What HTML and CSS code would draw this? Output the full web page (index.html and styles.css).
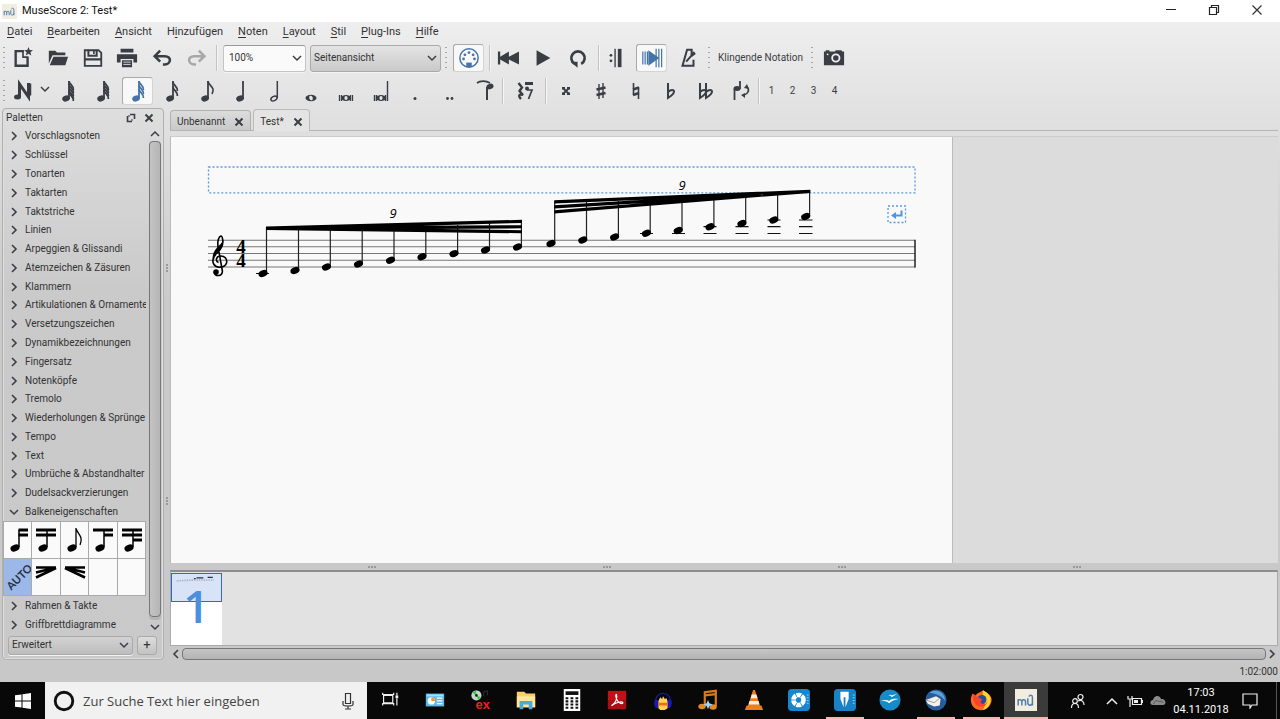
FILE: index.html
```html
<!DOCTYPE html>
<html lang="de">
<head>
<meta charset="utf-8">
<title>MuseScore 2: Test*</title>
<link rel="stylesheet" href="styles.css">
</head>
<body>
<svg class="defs" aria-hidden="true">
  <defs>
    <symbol id="chev-r" viewBox="0 0 10 10"><path d="M3 1l4 4-4 4" fill="none" stroke="#3b3f45" stroke-width="1.6"/></symbol>
    <symbol id="chev-d" viewBox="0 0 10 10"><path d="M1 3l4 4 4-4" fill="none" stroke="#3b3f45" stroke-width="1.5"/></symbol>
    <symbol id="cross" viewBox="0 0 10 10"><path d="M1.500 1.500l7 7m0-7l-7 7" stroke="#3b3f45" stroke-width="2"/></symbol>
    <symbol id="head" viewBox="-6 -5 12 10"><ellipse rx="4.700" ry="3.300" transform="rotate(-22)"/></symbol>
    <symbol id="note" viewBox="0 0 24 24"><ellipse cx="10" cy="19.500" rx="3.900" ry="2.900" transform="rotate(-20 10 19.500)" fill="currentColor"/><path d="M13 2v18" stroke="currentColor" stroke-width="1.800"/></symbol>
    <symbol id="flag" viewBox="0 0 24 24"><path d="M13 2c.4 3.500 5 4.500 4.400 9" stroke="currentColor" stroke-width="1.800" fill="none"/></symbol>
    <symbol id="flat" viewBox="0 0 24 24"><path d="M9 4v15c4-2.500 6-4.500 6-6.500s-3-2.500-6 .5" fill="none" stroke="currentColor" stroke-width="2"/></symbol>
    <symbol id="logo" viewBox="0 0 24 24"><rect width="24" height="24" fill="#f3ece0"/><path d="M3.500 18v-7m0 2c1-2 4-2 4 1v4m0-4c0-3 4-3 4 0v4M14 10v5c0 3.500 5 3.500 5 0m0 3V9c0-3-3.500-3-3.500-.5" fill="none" stroke="#4b7da8" stroke-width="1.600"/></symbol>
  </defs>
</svg>

<div class="window">
  <header class="titlebar">
    <svg class="app-icon"><use href="#logo"/></svg>
    <h1 class="app-title">MuseScore 2: Test*</h1>
    <div class="window-controls">
      <button class="win-btn" aria-label="Minimieren"><svg viewBox="0 0 12 12"><path d="M1 5.500h10" stroke="#222"/></svg></button>
      <button class="win-btn" aria-label="Wiederherstellen"><svg viewBox="0 0 12 12"><path d="M1.500 3.500h7v7h-7zM3.500 3.500v-2h7v7h-2" fill="none" stroke="#222" stroke-width="1.200"/></svg></button>
      <button class="win-btn" aria-label="Schließen"><svg viewBox="0 0 12 12"><path d="M1.500 1.500l9 9m0-9l-9 9" stroke="#333" stroke-width="1.200"/></svg></button>
    </div>
  </header>

  <nav class="menubar">
    <button><u>D</u>atei</button><button><u>B</u>earbeiten</button><button><u>A</u>nsicht</button><button>H<u>i</u>nzufügen</button><button><u>N</u>oten</button><button><u>L</u>ayout</button><button><u>S</u>til</button><button><u>P</u>lug-Ins</button><button><u>H</u>ilfe</button>
  </nav>

  <div class="toolbar">
    <span class="grip"></span>
    <div class="tools file-tools">
      <button class="tool" aria-label="Neu"><svg viewBox="0 0 24 24"><path d="M13 4.500H4v16h13v-9" fill="none" stroke="currentColor" stroke-width="2.600"/><path d="M12 4v7h6" fill="none" stroke="currentColor" stroke-width="1.800"/><path d="M18 0l1.300 3.300 3.600.2-2.800 2.300 1 3.600L18 7.400l-3 2 1-3.600-2.900-2.300 3.600-.2z" fill="currentColor"/></svg></button>
      <button class="tool" aria-label="Öffnen"><svg viewBox="0 0 24 24"><path d="M2 4h7l2 2h9v3H6L2 18zM7 10.500h16L20 20H3z" fill="currentColor"/></svg></button>
      <button class="tool" aria-label="Speichern"><svg viewBox="0 0 24 24"><path d="M3 3.500h15l3 3v14H3z" fill="none" stroke="currentColor" stroke-width="2"/><path d="M7 3v6.500h9V3M3 13.500h18" fill="none" stroke="currentColor" stroke-width="2.200"/><path d="M13 4v3.500" stroke="currentColor" stroke-width="1.800"/></svg></button>
      <button class="tool" aria-label="Drucken"><svg viewBox="0 0 24 24"><path d="M5 2h14v4H5zM1 8h22v9h-4v-4H5v4H1zM6.500 14.500h11V22h-11z" fill="currentColor"/><path d="M8 16.500h8M8 19h8" stroke="#ddd"/></svg></button>
      <button class="tool" aria-label="Rückgängig"><svg viewBox="0 0 24 24"><path d="M4 10h11c8 0 7 9 0 9h-2M10 4l-6 6 6 6" fill="none" stroke="currentColor" stroke-width="2.800"/></svg></button>
      <button class="tool disabled" aria-label="Wiederholen" disabled><svg viewBox="0 0 24 24"><path d="M20 10H9c-8 0-7 9 0 9h2M14 4l6 6-6 6" fill="none" stroke="currentColor" stroke-width="2.800"/></svg></button>
    </div>
    <span class="sep"></span>
    <div class="combo zoom-combo"><select aria-label="Zoom"><option>100%</option></select><svg><use href="#chev-d"/></svg></div>
    <div class="combo view-combo"><select aria-label="Ansicht"><option>Seitenansicht</option></select><svg><use href="#chev-d"/></svg></div>
    <span class="grip"></span>
    <button class="tool pressed" aria-label="MIDI-Eingabe"><svg viewBox="0 0 24 24"><circle cx="12" cy="12" r="10" fill="none" stroke="currentColor" stroke-width="1.600"/><g fill="currentColor"><circle cx="6" cy="13" r="1.500"/><circle cx="7.500" cy="8.500" r="1.500"/><circle cx="12" cy="6" r="1.500"/><circle cx="16.500" cy="8.500" r="1.500"/><circle cx="18" cy="13" r="1.500"/><path d="M9 17h6v5H9z"/></g></svg></button>
    <span class="sep"></span>
    <div class="tools play-tools">
      <button class="tool" aria-label="Zum Anfang"><svg viewBox="0 0 24 24"><path d="M1 5h2.500v5.500L13 5v5.500L24 5v14l-11-5.500V19l-9.500-5.500V19H1z" fill="currentColor"/></svg></button>
      <button class="tool" aria-label="Wiedergabe"><svg viewBox="0 0 24 24"><path d="M5 3.500L20 12 5 20.500z" fill="currentColor"/></svg></button>
      <button class="tool" aria-label="Schleife"><svg viewBox="0 0 24 24"><path d="M8.500 18.500a7.300 7.300 0 1 1 7 0" fill="none" stroke="currentColor" stroke-width="2.900"/><path d="M4 16h7.500v6.500z" fill="currentColor"/></svg></button>
    </div>
    <span class="sep"></span>
    <button class="tool" aria-label="Wiederholungen abspielen"><svg viewBox="0 0 24 24"><circle cx="6.500" cy="9" r="1.500" fill="currentColor"/><circle cx="6.500" cy="15" r="1.500" fill="currentColor"/><path d="M11 2v20" stroke="currentColor" stroke-width="1.500"/><path d="M16 2v20" stroke="currentColor" stroke-width="4"/></svg></button>
    <button class="tool pressed" aria-label="Partitur schwenken"><svg viewBox="0 0 24 24"><path d="M2 5v14M4.500 5v14M7 5v14M16.500 2v20M19.500 2v20M22.500 2v20" stroke="currentColor" stroke-width="1.300"/><path d="M8 3.500L20 12 8 20.500z" fill="currentColor"/></svg></button>
    <button class="tool" aria-label="Metronom"><svg viewBox="0 0 24 24"><path d="M16 8V3h-5L6 20.500h12V14M10 16L17 8" fill="none" stroke="currentColor" stroke-width="2.200"/><path d="M14.500 8l4-3.500 2 3-4 3z" fill="currentColor"/></svg></button>
    <span class="grip"></span>
    <button class="text-tool">Klingende Notation</button>
    <span class="grip"></span>
    <button class="tool camera" aria-label="Bildschirmfoto"><svg viewBox="0 0 24 24"><path d="M1 5h2V3.500h4V5h6l1-1.500h6L21 5h2v15H1z" fill="currentColor"/><circle cx="14" cy="12" r="4" fill="currentColor" stroke="#eee" stroke-width="2"/><circle cx="5" cy="8" r="1" fill="#eee"/></svg></button>
  </div>

  <div class="toolbar notes-bar">
    <span class="grip"></span>
    <div class="input-mode">
      <button class="tool" aria-label="Noteneingabe"><svg viewBox="0 0 24 24"><path d="M7.500 18V5l9 13V4" fill="none" stroke="currentColor" stroke-width="3"/><ellipse cx="5.500" cy="18" rx="3.500" ry="2.500" fill="currentColor"/><path d="M18.500 4.500v12" stroke="currentColor" stroke-width="1.500"/></svg></button>
      <button class="drop" aria-label="Eingabemodus"><svg><use href="#chev-d"/></svg></button>
    </div>
    <div class="tools duration-tools">
      <button class="tool" aria-label="128stel"><svg viewBox="0 0 24 24"><use href="#note"/><use href="#flag"/><use href="#flag" y="3"/><use href="#flag" y="6"/><use href="#flag" y="9"/><use href="#flag" y="11"/></svg></button>
      <button class="tool" aria-label="64stel"><svg viewBox="0 0 24 24"><use href="#note"/><use href="#flag"/><use href="#flag" y="3"/><use href="#flag" y="6"/><use href="#flag" y="9"/></svg></button>
      <button class="tool pressed" aria-label="32stel"><svg viewBox="0 0 24 24"><use href="#note"/><use href="#flag"/><use href="#flag" y="4"/><use href="#flag" y="8"/></svg></button>
      <button class="tool" aria-label="16tel"><svg viewBox="0 0 24 24"><use href="#note"/><use href="#flag" y="1"/><use href="#flag" y="6"/></svg></button>
      <button class="tool" aria-label="Achtel"><svg viewBox="0 0 24 24"><use href="#note"/><path d="M13 2c.4 5 8 6 4 13" fill="none" stroke="currentColor" stroke-width="1.600"/></svg></button>
      <button class="tool" aria-label="Viertel"><svg viewBox="0 0 24 24"><use href="#note"/></svg></button>
      <button class="tool" aria-label="Halbe"><svg viewBox="0 0 24 24"><ellipse cx="10" cy="19.500" rx="3.300" ry="2.100" transform="rotate(-28 10 19.500)" fill="none" stroke="currentColor" stroke-width="1.500"/><path d="M13.300 2v17" stroke="currentColor" stroke-width="1.500"/></svg></button>
      <button class="tool" aria-label="Ganze"><svg viewBox="0 0 24 24"><ellipse cx="12" cy="19" rx="5.500" ry="3.300" fill="currentColor"/><ellipse cx="12" cy="19" rx="1.800" ry="2.300" fill="#e5e5e5" transform="rotate(-20 12 19)"/></svg></button>
      <button class="tool" aria-label="Doppelganze"><svg viewBox="0 0 24 24"><ellipse cx="12" cy="19" rx="5" ry="3" fill="currentColor"/><ellipse cx="12" cy="19" rx="1.600" ry="2" fill="#e5e5e5"/><path d="M5.500 16v6M7.500 16v6M16.500 16v6M18.500 16v6" stroke="currentColor" stroke-width="1.300"/></svg></button>
      <button class="tool" aria-label="Longa"><svg viewBox="0 0 24 24"><ellipse cx="12" cy="19" rx="5" ry="3" fill="currentColor"/><ellipse cx="12" cy="19" rx="1.600" ry="2" fill="#e5e5e5"/><path d="M5.500 16v6M7.500 16v6M16.500 16v6M18.500 2v20" stroke="currentColor" stroke-width="1.400"/></svg></button>
      <button class="tool" aria-label="Punktierung"><svg viewBox="0 0 24 24"><circle cx="12" cy="19.500" r="1.500" fill="currentColor"/></svg></button>
      <button class="tool" aria-label="Doppelpunktierung"><svg viewBox="0 0 24 24"><circle cx="9.500" cy="19.500" r="1.400" fill="currentColor"/><circle cx="14" cy="19.500" r="1.400" fill="currentColor"/></svg></button>
      <button class="tool" aria-label="Haltebogen"><svg viewBox="0 0 24 24"><path d="M4 4c3-2.500 9-2.500 13 0" fill="none" stroke="currentColor" stroke-width="1.700"/><ellipse cx="17" cy="7.500" rx="3.600" ry="2.700" transform="rotate(-20 17 7.500)" fill="currentColor"/><path d="M14 8v13" stroke="currentColor" stroke-width="2"/></svg></button>
    </div>
    <span class="sep"></span>
    <button class="tool" aria-label="Pause"><svg viewBox="0 0 24 24"><path d="M5.500 4L9 8.500 6.500 12l3.500 4c-4-1.500-5 1-2 4" fill="none" stroke="currentColor" stroke-width="2.400"/><path d="M12 4.500h8" stroke="currentColor" stroke-width="3"/><circle cx="14" cy="9.500" r="2" fill="currentColor"/><path d="M14 11h5L15.500 20" fill="none" stroke="currentColor" stroke-width="1.700"/></svg></button>
    <span class="sep"></span>
    <div class="tools accidental-tools">
      <button class="tool" aria-label="Doppelkreuz"><svg viewBox="0 0 24 24"><path d="M9 9l6 6m0-6l-6 6" stroke="currentColor" stroke-width="1.800"/><path d="M8 8h3v2.500H8zm5 0h3v2.500h-3zm-5 5.500h3V16H8zm5 0h3V16h-3z" fill="currentColor"/></svg></button>
      <button class="tool" aria-label="Kreuz"><svg viewBox="0 0 24 24"><path d="M10 5v15M14 4v15" stroke="currentColor" stroke-width="1.400"/><path d="M7.500 10.500l9-2M7.500 16l9-2" stroke="currentColor" stroke-width="2.500"/></svg></button>
      <button class="tool" aria-label="Auflösungszeichen"><svg viewBox="0 0 24 24"><path d="M9.500 4v12m5-8v12" stroke="currentColor" stroke-width="1.600"/><path d="M9 10.500l6-2M9 16l6-2" stroke="currentColor" stroke-width="2.500"/></svg></button>
      <button class="tool" aria-label="B"><svg viewBox="0 0 24 24"><use href="#flat"/></svg></button>
      <button class="tool" aria-label="Doppel-B"><svg viewBox="0 0 24 24"><use href="#flat" x="-3"/><use href="#flat" x="3"/></svg></button>
      <button class="tool" aria-label="Umkehren"><svg viewBox="0 0 24 24"><ellipse cx="8" cy="9.500" rx="3.500" ry="2.500" fill="currentColor"/><path d="M5.500 10v11M11 2v8" stroke="currentColor" stroke-width="1.800"/><path d="M18 8c3 3 1 7-3 8" fill="none" stroke="currentColor" stroke-width="1.600"/><path d="M15 9l3-4 2 5zm1 5l-4 2 4 3z" fill="currentColor"/></svg></button>
    </div>
    <span class="sep"></span>
    <div class="voices"><button>1</button><button>2</button><button>3</button><button>4</button></div>
  </div>

  <main class="workspace">
    <aside class="palettes">
      <header class="dock-head"><h2>Paletten</h2>
        <button class="mini" aria-label="Abdocken"><svg viewBox="0 0 10 10"><path d="M4 1.500h4.500V6M1.500 3v5.500H6" fill="none" stroke="#3b3f45" stroke-width="1.600"/><path d="M2 3h2M6 8V6" stroke="#3b3f45"/></svg></button>
        <button class="mini" aria-label="Schließen"><svg><use href="#cross"/></svg></button>
      </header>
      <div class="palette-scroll">
        <div class="palette-list">
          <button class="row"><svg><use href="#chev-r"/></svg>Vorschlagsnoten</button>
          <button class="row"><svg><use href="#chev-r"/></svg>Schlüssel</button>
          <button class="row"><svg><use href="#chev-r"/></svg>Tonarten</button>
          <button class="row"><svg><use href="#chev-r"/></svg>Taktarten</button>
          <button class="row"><svg><use href="#chev-r"/></svg>Taktstriche</button>
          <button class="row"><svg><use href="#chev-r"/></svg>Linien</button>
          <button class="row"><svg><use href="#chev-r"/></svg>Arpeggien &amp; Glissandi</button>
          <button class="row"><svg><use href="#chev-r"/></svg>Atemzeichen &amp; Zäsuren</button>
          <button class="row"><svg><use href="#chev-r"/></svg>Klammern</button>
          <button class="row"><svg><use href="#chev-r"/></svg>Artikulationen &amp; Ornamente</button>
          <button class="row"><svg><use href="#chev-r"/></svg>Versetzungszeichen</button>
          <button class="row"><svg><use href="#chev-r"/></svg>Dynamikbezeichnungen</button>
          <button class="row"><svg><use href="#chev-r"/></svg>Fingersatz</button>
          <button class="row"><svg><use href="#chev-r"/></svg>Notenköpfe</button>
          <button class="row"><svg><use href="#chev-r"/></svg>Tremolo</button>
          <button class="row"><svg><use href="#chev-r"/></svg>Wiederholungen &amp; Sprünge</button>
          <button class="row"><svg><use href="#chev-r"/></svg>Tempo</button>
          <button class="row"><svg><use href="#chev-r"/></svg>Text</button>
          <button class="row"><svg><use href="#chev-r"/></svg>Umbrüche &amp; Abstandhalter</button>
          <button class="row"><svg><use href="#chev-r"/></svg>Dudelsackverzierungen</button>
          <button class="row"><svg><use href="#chev-d"/></svg>Balkeneigenschaften</button>
          <div class="cells">
            <button class="cell" aria-label="Balkenanfang"><svg viewBox="0 0 28 36"><use href="#head" x="5" y="21" width="12" height="10"/><path d="M15 25V8" stroke="#000" stroke-width="1.500"/><path d="M14.500 8H24m-9.500 5H24" stroke="#000" stroke-width="3"/></svg></button>
            <button class="cell" aria-label="Balkenmitte"><svg viewBox="0 0 28 36"><use href="#head" x="5" y="21" width="12" height="10"/><path d="M15 25V8" stroke="#000" stroke-width="1.500"/><path d="M4 8h20M4 13h20" stroke="#000" stroke-width="3"/></svg></button>
            <button class="cell" aria-label="Kein Balken"><svg viewBox="0 0 28 36"><use href="#head" x="5" y="21" width="12" height="10"/><path d="M15 25V6c1 6 8 8 4 17" fill="none" stroke="#000" stroke-width="1.300"/></svg></button>
            <button class="cell" aria-label="32stel-Unterbalken"><svg viewBox="0 0 28 36"><use href="#head" x="5" y="21" width="12" height="10"/><path d="M15 25V8" stroke="#000" stroke-width="1.500"/><path d="M4 8h20M15 13h9" stroke="#000" stroke-width="3"/></svg></button>
            <button class="cell" aria-label="64stel-Unterbalken"><svg viewBox="0 0 28 36"><use href="#head" x="5" y="21" width="12" height="10"/><path d="M15 25V8" stroke="#000" stroke-width="1.500"/><path d="M4 8h20M4 13h20M15 18h9" stroke="#000" stroke-width="3"/></svg></button>
            <button class="cell selected"><span class="auto">AUTO</span></button>
            <button class="cell" aria-label="Beschleunigend"><svg viewBox="0 0 28 36"><path d="M4 8.500h20M4 13.500L24 8.500M4 18.500L24 9" stroke="#000" stroke-width="2.600"/></svg></button>
            <button class="cell" aria-label="Verlangsamend"><svg viewBox="0 0 28 36"><path d="M4 8.500h20M4 8.500l20 5M4 9l20 9.500" stroke="#000" stroke-width="2.600"/></svg></button>
            <span class="cell"></span><span class="cell"></span>
          </div>
          <button class="row"><svg><use href="#chev-r"/></svg>Rahmen &amp; Takte</button>
          <button class="row"><svg><use href="#chev-r"/></svg>Griffbrettdiagramme</button>
        </div>
        <div class="vbar">
          <button class="arrow up" aria-label="Nach oben"><svg><use href="#chev-d"/></svg></button>
          <div class="vtrack"><div class="vthumb"></div></div>
          <button class="arrow" aria-label="Nach unten"><svg><use href="#chev-d"/></svg></button>
        </div>
      </div>
      <div class="workspace-pick">
        <div class="combo"><select aria-label="Arbeitsbereich"><option>Erweitert</option></select><svg><use href="#chev-d"/></svg></div>
        <button class="add" aria-label="Hinzufügen">+</button>
      </div>
    </aside>
    <div class="vsplit"><span></span><span></span></div>

    <section class="editor">
      <div class="tabs">
        <div class="tab"><button class="tab-name">Unbenannt</button><button class="mini" aria-label="Unbenannt schließen"><svg><use href="#cross"/></svg></button></div>
        <div class="tab active"><button class="tab-name">Test*</button><button class="mini" aria-label="Test schließen"><svg><use href="#cross"/></svg></button></div>
      </div>
      <div class="canvas">
        <div class="page">
          <svg class="score" viewBox="171 137 782 427" role="img" aria-label="Notenzeile mit zwei Nonolen">
            <g fill="none" stroke="#5b9bdd" stroke-width="1.300" stroke-dasharray="2 2"><rect x="208.500" y="167" width="706.500" height="25.800"/><rect x="888" y="206" width="17.500" height="16.500"/></g>
            <path d="M901.500 210.500v5H894" fill="none" stroke="#4f94dc" stroke-width="2"/><path d="M891 215.500l5-3.500v7z" fill="#4f94dc"/>
            <path d="M208 240.300h707M208 246.800h707M208 253.500h707M208 260.300h707M208 267h707" stroke="#777" stroke-width="1.100"/>
            <path d="M915 239.800v27.700" stroke="#222" stroke-width="1.500"/>
            <path d="M218.500 262.500c-3.300-1.500-2.500-6 1.500-6.500 4.500-.5 7.500 3 6.500 7-1.500 5-10 5.500-12.500 1.500-2.500-4-.5-8.500 4-12.500 4-4 5-7 4.800-11-.2-3.500-1.300-5-2-5-2 .5-3.600 5.500-2.800 10.500l4.300 24c1 6-7 6.500-8 2" fill="none" stroke="#000" stroke-width="1.600"/>
            <path d="M212.800 260c0-3 2-6 5-8.500 3.500-3 5.500-6 5.500-10l.2-2c-1.400 4-6 7-8.700 11-2.500 4-3 8.500-.7 12z"/><circle cx="216" cy="272" r="2.800"/>
            <g class="timesig"><text x="241" y="253">4</text><text x="241" y="267">4</text></g>
            <path d="M266.500 227v46M298.500 227v43M330.300 227v40M362.200 227v37M394 227v33M425.800 227v29M457.600 225v28M489.500 223v26M521.400 220v26M554.700 201v42M586.500 201v38M618.400 201v35M650.200 200v33M682 198v32M713.900 196v30M745.700 194v29M777.600 192v28M809.600 190v26" stroke="#222" stroke-width="1.200"/>
            <path d="M266 226.500l256-6.700v3.100L266 230zM266 226.500l256-1.300v3.100L266 230zM266 226.500l256 3.700v3.100L266 230z"/>
            <path d="M554.300 200.200l256-10.500v3.200l-256 10.500zM554.300 205.200l256-15.500v3.200l-256 15.500zM554.300 210.200l256-20.500v3.200l-256 20.500z"/>
            <path d="M256 273.500h13M640 233.500h13M672 233.500h13M703.500 233.500h13M703.500 226.700h13M735.500 233.500h13M735.500 226.700h13M767.500 233.500h13M767.500 226.700h13M767.500 220h13M799 233.500h13.500M799 226.700h13.500M799 220h13.500" stroke="#111" stroke-width="1.200"/>
            <g>
              <use href="#head" x="257" y="268.500" width="12" height="10"/><use href="#head" x="289" y="265.500" width="12" height="10"/><use href="#head" x="320.500" y="262" width="12" height="10"/><use href="#head" x="352.500" y="259" width="12" height="10"/><use href="#head" x="384.500" y="255.300" width="12" height="10"/><use href="#head" x="416" y="251.700" width="12" height="10"/><use href="#head" x="448" y="248.600" width="12" height="10"/><use href="#head" x="479.500" y="245" width="12" height="10"/><use href="#head" x="511.500" y="242" width="12" height="10"/>
              <use href="#head" x="545" y="238.500" width="12" height="10"/><use href="#head" x="576.800" y="235" width="12" height="10"/><use href="#head" x="608.600" y="232" width="12" height="10"/><use href="#head" x="640.400" y="228.300" width="12" height="10"/><use href="#head" x="672.200" y="225.500" width="12" height="10"/><use href="#head" x="704" y="221.700" width="12" height="10"/><use href="#head" x="735.900" y="218.500" width="12" height="10"/><use href="#head" x="767.800" y="215" width="12" height="10"/><use href="#head" x="799.700" y="211.500" width="12" height="10"/>
            </g>
            <g class="tuplet"><text x="393" y="218">9</text><text x="682" y="190">9</text></g>
          </svg>
        </div>
      </div>
      <div class="hsplit"><span></span><span></span><span></span><span></span></div>
      <div class="navigator">
        <div class="thumb"><div class="viewport"><svg viewBox="0 0 50 14"><path d="M2 8l20-1h24" fill="none" stroke="#9ab" stroke-width="2" stroke-dasharray="1 1"/><path d="M22 5.500h2M25 4.500h8M38 4h6" stroke="#234" stroke-width="1.500"/></svg></div><span class="pageno">1</span></div>
      </div>
      <div class="hbar">
        <button class="arrow left" aria-label="Nach links"><svg><use href="#chev-r"/></svg></button>
        <div class="hthumb"></div>
        <button class="arrow" aria-label="Nach rechts"><svg><use href="#chev-r"/></svg></button>
      </div>
    </section>
  </main>

  <footer class="status">1:02:000</footer>

  <div class="taskbar">
    <button class="start" aria-label="Start"><svg viewBox="0 0 16 16"><path d="M0 2.300L6.500 1.400v6.100H0zM7.500 1.200L16 0v7.500H7.500zM0 8.500h6.500v6.100L0 13.700zM7.500 8.500H16V16l-8.500-1.200z" fill="#fff"/></svg></button>
    <label class="search">
      <svg class="cortana" viewBox="0 0 20 20"><circle cx="10" cy="10" r="8" fill="none" stroke="#111" stroke-width="2.600"/></svg>
      <input type="text" placeholder="Zur Suche Text hier eingeben" aria-label="Suche">
      <svg class="mic" viewBox="0 0 14 18"><path d="M4.500 1.500h5v10h-5zM2 9v3.500c0 2 10 2 10 0V9M7 14v3M4 17h6" fill="none" stroke="#333" stroke-width="1.200"/></svg>
    </label>
    <div class="apps">
      <button aria-label="Aktive Anwendungen"><svg viewBox="0 0 24 24"><path d="M5 7h10v8H5zM4 4v2h12V4M4 18v-2h12v2M19.500 4v3m0 3v8" fill="none" stroke="#eee" stroke-width="1.300"/><path d="M18 7h3v3h-3z" fill="#eee"/></svg></button>
      <button aria-label="Systemsteuerung"><svg viewBox="0 0 24 24"><path d="M2 5h20v14H2z" fill="#5cb9ea"/><path d="M3 6h18v2H3z" fill="#a5def8"/><circle cx="8" cy="13" r="4" fill="#fff"/><path d="M8 13V9a4 4 0 0 1 4 4z" fill="#f39b28"/><path d="M14 10h6m-6 3h6m-6 3h6" stroke="#fff" stroke-width="1.500"/></svg></button>
      <button aria-label="Exact Audio Copy"><svg viewBox="0 0 24 24"><circle cx="7" cy="7" r="5.500" fill="#c8d5ce"/><path d="M7 7L2.500 4l4-2.500zM7 7l5 2-3 3z" fill="#35cc42"/><circle cx="7" cy="7" r="1.500" fill="#222"/><path d="M15 8V3l4-1v5" fill="none" stroke="#333"/><text x="6" y="22" class="ex">ex</text></svg></button>
      <button aria-label="Explorer"><svg viewBox="0 0 24 24"><path d="M2 3h8l2 2h10v15H2z" fill="#f5cf69"/><path d="M2 8h20v12H2z" fill="#ffe69c"/><path d="M5 22v-9h14v9h-4v-5H9v5z" fill="#49aadd"/></svg></button>
      <button aria-label="Rechner"><svg viewBox="0 0 24 24"><path d="M3 0h18v24H3z" fill="#fff"/><path d="M5 2.500h14v4H5z" fill="#111"/><path d="M5 10h14M5 13.500h14M5 17h14M5 20.500h14" stroke="#111" stroke-width="2.200" stroke-dasharray="3 2.400"/></svg></button>
      <button aria-label="Adobe Reader"><svg viewBox="0 0 24 24"><path d="M2 2h20v20H2z" fill="#c21016"/><path d="M2 12h20v10H2z" fill="#8d0e12" opacity=".5"/><path d="M6 18c4-2 7-8 5.500-12-1.500-1-1 5 2 8s5 2 5 1c-.5-2-8-.5-12 3z" fill="none" stroke="#fff" stroke-width="1.200"/></svg></button>
      <button aria-label="Audacity"><svg viewBox="0 0 24 24"><path d="M4 16C2 1 22 1 20 16" fill="none" stroke="#1b1e90" stroke-width="1.500"/><path d="M3 12h4v9H5c-3-2-3-6-2-9zm18 0h-4v9h2c3-2 3-6 2-9z" fill="#1a1aba"/><path d="M7 13l2-4 2 2 1-3 2 3 2-1 1 4v7l-3 2H9l-2-2z" fill="#ffd54a"/><path d="M7 15h10v3H7z" fill="#f36a1c"/></svg></button>
      <button aria-label="Musikprogramm"><svg viewBox="0 0 24 24"><path d="M8.500 19V3.500L20.500 2v17M8.500 7l12-1.500" fill="none" stroke="#d67b1d" stroke-width="2.400"/><ellipse cx="5.500" cy="19" rx="4" ry="3" fill="#e08b27"/><ellipse cx="17.500" cy="19.500" rx="4" ry="3" fill="#e08b27"/><path d="M12 12l1.500 3.500L17 17l-3.500 1.500L12 22l-1.500-3.500L7 17l3.500-1.500z" fill="#9cd6ff"/></svg></button>
      <button aria-label="VLC"><svg viewBox="0 0 24 24"><path d="M11 1h2l6 19H5z" fill="#ef7d15"/><path d="M9.500 6h5l1.500 4H8.300zM7 13h10l1 4H6z" fill="#eee"/><path d="M4 18h16l2 5H2z" fill="#ed8212"/></svg></button>
      <button aria-label="Fotoprogramm"><svg viewBox="0 0 24 24"><rect width="24" height="24" rx="4" fill="#1886cf"/><circle cx="11.500" cy="12" r="5.500" fill="none" stroke="#fff" stroke-width="5" stroke-dasharray="4.960 .8"/><path d="M21.500 6v12" stroke="#8fd0f8" stroke-dasharray="1 2" stroke-width="2"/></svg></button>
      <button class="running" aria-label="Schreibprogramm"><svg viewBox="0 0 24 24"><rect width="24" height="24" rx="4" fill="#1682c8"/><path d="M7 3h9v8l-3.500 9V9h-2v11L7 11z" fill="#fff"/><path d="M21.500 6v12" stroke="#8fd0f8" stroke-dasharray="1 2" stroke-width="2"/></svg></button>
      <button aria-label="OpenOffice"><svg viewBox="0 0 24 24"><circle cx="12" cy="12" r="11.500" fill="#168bc9"/><path d="M10 7c2-1 3-1 4 0 2-1 3-1 6-1-3 1-4 1-6 3-1-2-2-2-4-2zM2 13c4-1.500 7-1.500 9 0 3-2.500 6-2.500 10-2-4 1-7 2-10 4.500-2-2.500-5-2.500-9-2.500z" fill="#fff"/></svg></button>
      <button class="running" aria-label="Thunderbird"><svg viewBox="0 0 24 24"><circle cx="12" cy="12" r="11.500" fill="#285b9c"/><path d="M5 4c8-5 17 0 17 9-3-5-9-8-17-9z" fill="#5ba1dc"/><path d="M1 12l11-4 5 3-1 7-6 1-7-3z" fill="#f4f0e9"/><path d="M1 12l9 3 6-5" fill="none" stroke="#999"/></svg></button>
      <button class="running" aria-label="Firefox"><svg viewBox="0 0 24 24"><path d="M3 5l3 2c2-3 5-3 8-5 8 3 11 8 9 13-4 12-21 10-22-2-.2-3 .5-6 2-8z" fill="#ff6a1b"/><path d="M14 1c7 4 10 8 8 14-1 4-4 7-8 8 4-6 3-12 0-16z" fill="#ffd532"/><circle cx="13" cy="11.500" r="5" fill="#294b9c"/><path d="M3 6c3 1 4 3 8 4l3 2c-3 0-3 2-1 4 3 2 6-1 6-4 1 10-17 11-16-6z" fill="#f9442d"/></svg></button>
      <button class="running active" aria-label="MuseScore"><svg><use href="#logo"/></svg></button>
    </div>
    <div class="tray">
      <button aria-label="Kontakte"><svg viewBox="0 0 16 16"><circle cx="10.500" cy="4" r="2.500" fill="none" stroke="#eee" stroke-width="1.200"/><circle cx="5" cy="8" r="2.300" fill="none" stroke="#eee" stroke-width="1.200"/><path d="M1.500 15c0-6 7-6 7 0M8 8c4-2 6 1 6 4" fill="none" stroke="#eee" stroke-width="1.200"/></svg></button>
      <button class="small" aria-label="Ausgeblendete Symbole"><svg viewBox="0 0 16 16"><path d="M3 11l5-5 5 5" fill="none" stroke="#eee" stroke-width="1.500"/></svg></button>
      <button class="small" aria-label="Akku"><svg viewBox="0 0 16 16"><path d="M5.500 5.500h9v6h-9zM3 10v4M1 3v3h4V3M3 6v5" fill="none" stroke="#eee" stroke-width="1.200"/><path d="M7 7h4v3H7zM15 7h1v3h-1z" fill="#eee"/></svg></button>
      <button class="small" aria-label="OneDrive"><svg viewBox="0 0 16 16"><path d="M3 12c-4 0-3-5 0-5 1-5 7-5 8-1 5-1 6 6 2 6z" fill="#8b8b8b"/><path d="M4 11c0-4 4-4 5-2 3-2 4 0 4 1" fill="none" stroke="#555"/></svg></button>
      <time class="clock"><span>17:03</span><span>04.11.2018</span></time>
      <button aria-label="Benachrichtigungen"><svg viewBox="0 0 16 16"><path d="M1 1h14v11H10l-2 3v-3H1z" fill="none" stroke="#eee" stroke-width="1.200"/></svg></button>
    </div>
  </div>
</div>
</body>
</html>
```

FILE: styles.css
```css
* { box-sizing: border-box; }
body { margin: 0; font: 10px/16px Roboto, "Noto Sans", sans-serif; color: #333; }
.defs { position: absolute; width: 0; height: 0; }
button { margin: 0; padding: 0; border: 0; background: none; font: inherit; color: inherit; }
h1, h2 { margin: 0; font-weight: 400; font-size: inherit; }
.window { display: flex; flex-direction: column; height: 100vh; min-height: 600px; overflow: hidden; background: linear-gradient(#fff 0, #eee 22px, #e2e2e2 107px, #cacaca 300px, #c8c8c8 100%); }

.titlebar { display: flex; align-items: center; flex: 0 0 22px; padding-left: 2px; background: #fff; color: #111; font-size: 11px; }
.app-icon { width: 15px; height: 15px; }
.app-title { margin-left: 5px; }
.window-controls { display: flex; align-self: flex-start; margin-left: auto; padding-right: 2px; }
.win-btn { display: grid; place-items: center; width: 43px; height: 19px; }
.win-btn svg { width: 12px; height: 12px; }

.menubar { display: flex; flex: 0 0 19px; align-items: center; gap: 15px; padding: 0 7px; font-size: 11px; }
.menubar u { text-underline-offset: 2px; }

.toolbar { display: flex; align-items: center; flex: 0 0 34px; padding-left: 2px; color: #3a3e44; }
.notes-bar { flex-basis: 32px; }
.grip { flex: 0 0 4px; height: 26px; background: radial-gradient(circle, #a5a5a5 1px, transparent 1px) 0 0 / 4px 5px; }
.sep { flex: 0 0 2px; height: 26px; border-left: 1px solid #c3c3c3; border-right: 1px solid #f6f6f6; }
.tools { display: flex; align-items: center; }
.tools .tool { flex: 1; margin: 0 2px; }
.tool { display: grid; place-items: center; flex: 0 0 31px; height: 28px; border-radius: 3px; border: 1px solid transparent; color: #3a3e44; }
.tool svg { width: 22px; height: 22px; }
.notes-bar .tool svg { width: 24px; height: 24px; }
.pressed { background: #f8f8f8; border-color: #a9a9a9 #d4d4d4 #d4d4d4 #a9a9a9; color: #4474a8; }
.disabled { color: #a7a7a7; }
.file-tools { width: 208px; margin-right: 2px; }
.combo { position: relative; display: flex; height: 27px; border: 1px solid #aaa; border-radius: 3px; background: linear-gradient(#d2d2d2, #bdbdbd); box-shadow: 0 1px #f3f3f3; }
.combo select { appearance: none; width: 100%; padding: 0 20px 0 3px; border: 0; background: none; font: inherit; color: #333; }
.combo svg { position: absolute; right: 3px; top: 50%; width: 10px; height: 10px; margin-top: -5px; pointer-events: none; }
.zoom-combo { width: 83px; margin: 0 4px 0 5px; background: #fafafa; border-color: #999 #c4c4c4 #c4c4c4; }
.zoom-combo select { padding-left: 5px; }
.view-combo { width: 131px; margin-right: 3px; background: linear-gradient(#e4e4e4, #c9c9c9); }
.toolbar > .pressed { margin: 0 5px; }
.play-tools { width: 104px; margin-right: 3px; }
.tool + .grip { margin-left: 4px; }
.text-tool { padding: 0 7px; white-space: nowrap; }
.toolbar > .camera { margin-left: 4px; }
.input-mode { display: flex; align-items: center; width: 45px; padding-left: 2px; }
.drop { width: 12px; height: 20px; }
.drop svg { width: 10px; height: 10px; }
.duration-tools { width: 451px; }
.notes-bar > .tool { margin: 0 5px; }
.accidental-tools { width: 209px; margin-left: 2px; }
.voices { display: flex; margin-left: 1px; }
.voices button { width: 21px; }

.workspace { display: flex; flex: 1; min-height: 0; padding-right: 2px; }
.palettes { display: flex; flex-direction: column; flex: 0 0 162px; margin: 1px 0 1px 2px; border: 1px solid #b0b0b0; border-radius: 4px; box-shadow: inset 0 0 0 1px #dedede; background: linear-gradient(#dedede, #cacaca 180px, #c9c9c9); }
.dock-head { display: flex; align-items: center; gap: 8px; flex: 0 0 18px; padding: 0 9px 0 3px; }
.dock-head h2 { flex: 1; }
.mini { display: grid; place-items: center; width: 10px; height: 12px; }
.mini svg { width: 10px; height: 10px; }
.palette-scroll { display: flex; flex: 1; min-height: 0; }
.palette-list { display: grid; grid-template-rows: repeat(21, minmax(0, 1fr)) 75px repeat(2, minmax(0, 1fr)); flex: 1; min-width: 0; }
.row { display: flex; align-items: center; gap: 6px; margin-left: 6px; overflow: hidden; white-space: nowrap; text-align: left; }
.row svg { flex: 0 0 10px; height: 10px; }
.cells { display: grid; grid-template-columns: repeat(5, 1fr); grid-auto-rows: 1fr; gap: 1px; border: 1px solid #aaa; background: #aaa; }
.cell { display: grid; place-items: center; min-width: 0; overflow: hidden; background: #fafafa; }
.cell svg { width: 28px; height: 36px; }
.selected { background: #9bb8e8; }
.auto { font: bold 11px/12px Lato, sans-serif; color: #263247; transform: rotate(-45deg); }
.vbar { display: flex; flex-direction: column; align-items: center; flex: 0 0 17px; }
.arrow { display: grid; place-items: center; width: 14px; height: 14px; }
.arrow svg { width: 10px; height: 10px; }
.up, .left { transform: rotate(180deg); }
.vtrack { flex: 1; width: 12px; padding-bottom: 3px; border-radius: 4px; background: #b5b5b5; }
.vthumb { height: 100%; border: 1px solid #777; border-radius: 4px; background: linear-gradient(90deg, #c4c4c4, #b5b5b5); }
.workspace-pick { display: flex; align-items: center; gap: 4px; flex: 0 0 25px; padding: 0 6px 3px 5px; }
.workspace-pick .combo { flex: 1; height: 19px; }
.add { width: 20px; height: 19px; border: 1px solid #aaa; border-radius: 3px; background: linear-gradient(#ddd, #c2c2c2); font-size: 13px; line-height: 14px; }
.vsplit { display: flex; flex-direction: column; justify-content: space-around; align-items: center; flex: 0 0 6px; padding: 44px 0; }
.vsplit span { height: 8px; border-left: 2px dotted #999; }

.editor { display: flex; flex-direction: column; flex: 1; min-width: 0; }
.tabs { display: flex; align-items: flex-end; flex: 0 0 24px; gap: 2px; padding-top: 2px; border-bottom: 1px solid #b5b5b5; }
.tab { display: flex; align-items: center; gap: 9px; height: 20px; padding: 3px 6px 0; border: 1px solid #b0b0b0; border-bottom: 0; border-radius: 4px 4px 0 0; background: linear-gradient(#dcdcdc, #c9c9c9); }
.tab.active { height: 22px; padding-top: 2px; background: #e4e4e4; border-color: #bbb; margin-bottom: -1px; }
.canvas { flex: 1; min-height: 0; margin-top: 5px; border-left: 1px solid #bbb; border-top: 1px solid #ccc; overflow: hidden; background: #dcdcdc; }
.page { width: 782px; height: 100%; overflow: hidden; background: #f9f9f9; border-right: 1px solid #bbb; }
.score { display: block; width: 782px; height: 427px; }
.timesig { font: bold 19px "Liberation Serif", serif; text-anchor: middle; }
.tuplet { font: italic 13px "Open Sans", sans-serif; text-anchor: middle; }
.hsplit { display: flex; align-items: center; justify-content: space-around; flex: 0 0 7px; padding: 0 84px; }
.hsplit span { width: 8px; border-top: 2px dotted #999; }
.navigator { display: flex; flex: 0 0 76px; padding-top: 1px; border: 1px solid #aaa; border-top: 2px solid #8e8e8e; background: #e2e2e2; }
.thumb { display: flex; justify-content: center; position: relative; width: 51px; background: #fff; }
.viewport { position: absolute; inset: 0 0 auto; height: 29px; border: 1px solid #3268c8; background: #d8e3f8; }
.viewport svg { display: block; width: 100%; height: 12px; }
.pageno { position: relative; margin-top: 2px; font: 600 46px/60px "Open Sans", sans-serif; color: #4a90df; }
.hbar { display: flex; align-items: center; flex: 0 0 15px; }
.hbar .arrow { width: 12px; }
.hthumb { flex: 1; height: 12px; border: 1px solid #777; border-radius: 4px; background: linear-gradient(#c6c6c6, #b3b3b3); }
.status { flex: 0 0 20px; padding-right: 2px; text-align: right; line-height: 21px; }

.taskbar { display: flex; flex: 0 0 37px; background: #080808; color: #fff; }
.start { display: grid; place-items: center; width: 45px; }
.start svg { width: 16px; height: 16px; }
.search { display: flex; align-items: center; flex: 0 1 322px; padding: 0 12px 0 8px; background: #f1f1f1; }
.cortana { width: 22px; height: 22px; }
.search input { flex: 1; min-width: 0; margin-left: 6px; padding: 0 2px; border: 0; background: none; font: 13px/20px "Open Sans", sans-serif; }
.search input::placeholder { color: #444; opacity: 1; }
.mic { width: 14px; height: 18px; }
.apps { display: flex; flex: 0 1 681px; }
.apps button { display: grid; place-items: center; flex: 1; margin: 0 4px; border-bottom: 2px solid transparent; }
.apps svg { width: 22px; height: 22px; }
.apps .running { border-bottom-color: #f7b5b0; }
.apps .active { flex: 0 0 44px; margin: 0; background: #3b3b3b; }
.ex { font: bold 14px "Liberation Sans", sans-serif; fill: #e22; }
.tray { display: flex; align-items: center; flex: 1; padding: 0 9px 0 13px; border-right: 1px solid #555; margin-right: 3px; }
.tray button { display: grid; place-items: center; width: 34px; height: 30px; }
.tray button:first-child { margin-right: 5px; }
.tray .small { width: 23px; }
.tray svg { width: 16px; height: 16px; }
.clock { display: flex; flex-direction: column; align-items: center; flex: 1; font: 11px/17px Roboto, sans-serif; }
```
